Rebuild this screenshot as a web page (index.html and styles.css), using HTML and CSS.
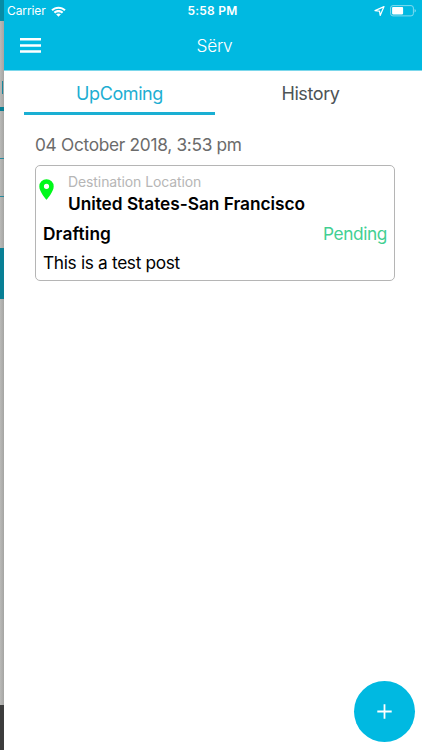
FILE: index.html
```html
<!DOCTYPE html>
<html lang="en">
<head>
<meta charset="utf-8">
<title>Sërv</title>
<link rel="stylesheet" href="styles.css">
</head>
<body>
<div class="app">
  <div class="drawer">
    <div class="drawer-header"></div>
    <div class="drawer-profile"><i class="drawer-mark"></i></div>
    <div class="drawer-bar"></div>
    <div class="drawer-row row-first"></div>
    <div class="drawer-row row-second"></div>
    <div class="drawer-row row-third"></div>
    <div class="drawer-active"></div>
    <div class="drawer-space"></div>
    <div class="drawer-footer"></div>
  </div>
  <main class="screen">
    <header class="header">
      <div class="status">
        <div class="status-left">
          <span class="carrier">Carrier</span>
          <svg class="wifi" width="15" height="11" viewBox="0 0 15 11" fill="#fff"><path d="M.3 3.6C4.3-.3 10.7-.3 14.7 3.6L13.2 5.1C10.1 2.1 4.9 2.1 1.8 5.1zM2.7 6C5.4 3.4 9.6 3.4 12.3 6L10.8 7.5C8.9 5.7 6.1 5.7 4.2 7.5zM5.1 8.3C6.5 7.1 8.5 7.1 9.9 8.3L7.5 10.7z"/></svg>
        </div>
        <span class="clock">5:58 PM</span>
        <div class="status-right">
          <svg width="11" height="11" viewBox="0 0 11 11" fill="none" stroke="#fff" stroke-width="1.2" stroke-linejoin="round"><path d="M10 .6 6.2 9.5 5.5 5.2 1 4.6z"/></svg>
          <svg width="26" height="12" viewBox="0 0 26 12"><rect x=".6" y=".6" width="22.8" height="10.3" rx="2.4" fill="none" stroke="#8fdff1" stroke-width=".9"/><rect x="2.1" y="2.1" width="11" height="7.3" rx=".8" fill="#fff"/><path d="M24.6 4v3.6q1.2-.5 1.2-1.8T24.6 4z" fill="#8fdff1"/></svg>
        </div>
      </div>
      <div class="nav">
        <svg class="menu" width="21" height="15" viewBox="0 0 21 15" fill="#fff"><path d="M0 0h21v2.6H0zM0 6.2h21v2.6H0zM0 12.2h21v2.6H0z"/></svg>
        <h1 class="title">Sërv</h1>
      </div>
    </header>
    <nav class="tabs">
      <div class="tab active"><span class="tab-up">UpComing</span></div>
      <div class="tab"><span class="tab-history">History</span></div>
    </nav>
    <section class="content">
      <div class="date"><span>04 October 2018, 3:53 pm</span></div>
      <article class="card">
        <div class="place">
          <svg class="pin" width="15" height="21" viewBox="0 0 15 21"><path fill="#00f91a" fill-rule="evenodd" d="M7.5.2A7.2 7.2 0 0 0 .3 7.4C.3 12.8 7.5 20.8 7.5 20.8s7.2-8 7.2-13.4A7.2 7.2 0 0 0 7.5.2zm0 9.7a2.6 2.6 0 1 1 0-5.2 2.6 2.6 0 0 1 0 5.2z"/></svg>
          <div class="place-text">
            <div class="label">Destination Location</div>
            <div class="city">United States-San Francisco</div>
          </div>
        </div>
        <div class="job">
          <span class="job-name">Drafting</span>
          <span class="job-status">Pending</span>
        </div>
        <div class="note">This is a test post</div>
      </article>
    </section>
    <div class="fab">
      <svg width="15" height="15" viewBox="0 0 15 15" stroke="#fff" stroke-width="1.8"><path d="M7.5.3v14.4M.3 7.5h14.4"/></svg>
    </div>
  </main>
</div>
</body>
</html>
```
FILE: styles.css
```css
* { box-sizing: border-box; }
body {
  margin: 0;
  font-family: Inter, "Liberation Sans", sans-serif;
  font-size: 17.3px;
  color: #000;
  background: #fff;
  white-space: nowrap;
}
.app { display: flex; height: 750px; overflow: hidden; }

.drawer {
  width: 4px;
  display: flex;
  flex-direction: column;
  background: linear-gradient(90deg, #b9b9b7, #a5a5a3);
}
.drawer-header { height: 21px; background: #078ca5; }
.drawer-profile { height: 86px; padding: 60px 0 0 2px; }
.drawer-mark { display: block; width: 1px; height: 13px; background: #16859b; }
.drawer-bar { height: 4px; background: #087f95; }
.drawer-row { border-bottom: 1px solid #26899c; }
.row-first { height: 48px; }
.row-second { height: 38px; }
.row-third { height: 51px; border-bottom: 0; }
.drawer-active { height: 51px; background: #087f95; }
.drawer-space { flex: 1; }
.drawer-footer { height: 45px; background: #3c3c3c; }

.screen { flex: 1; display: flex; flex-direction: column; background: #fff; }
.header { height: 71px; background: #00b9e1; color: #fff; border-bottom: 1px solid #7bd7eb; }
.status {
  height: 22px;
  padding: 0 6px 0 3px;
  display: grid;
  grid-template-columns: 1fr auto 1fr;
  align-items: center;
  font-size: 12px;
  line-height: 22px;
}
.status-left, .status-right { display: flex; align-items: center; }
.status-left { gap: 5px; }
.status-right { justify-content: flex-end; gap: 5px; }
.carrier { letter-spacing: -.1px; }
.clock { padding-left: 2px; font-weight: 600; letter-spacing: .2px; }
.nav {
  height: 48px;
  padding: 0 13px 0 16px;
  display: grid;
  grid-template-columns: 1fr auto 1fr;
  align-items: center;
}
.menu { margin-bottom: 1px; }
.title { margin: 0; font-size: 17.3px; font-weight: 350; line-height: 24px; letter-spacing: -.3px; }

.tabs { height: 45px; padding: 0 16px 0 20px; display: flex; }
.tab {
  width: 191px;
  height: 44px;
  border-bottom: 3px solid transparent;
  text-align: center;
  font-size: 18px;
  line-height: 46px;
  letter-spacing: -.4px;
  color: #4d5356;
}
.tab.active { color: #1daed2; border-color: #1aafd3; }

.content { flex: 1; padding: 17px 27px 0 31px; }
.date { height: 32px; line-height: 24px; letter-spacing: -.3px; color: #6b6b6b; }
.card { height: 116px; border: 1px solid #b5b5b5; border-radius: 5px; padding: 5px 7px 0; }
.place { display: flex; height: 47px; }
.pin { margin: 8px 14px 0 -4px; }
.label { height: 21px; font-size: 14px; line-height: 21px; letter-spacing: -.1px; color: #b6b6b6; }
.city { height: 24px; line-height: 24px; font-weight: 600; letter-spacing: -.03px; }
.job { display: flex; justify-content: space-between; height: 30px; line-height: 31px; }
.job-name { font-weight: 600; letter-spacing: .1px; }
.job-status { color: #42cf92; letter-spacing: -.4px; }
.note { height: 29px; line-height: 29px; letter-spacing: -.33px; }
.fab {
  width: 61px;
  height: 61px;
  margin: 0 7px 8px auto;
  border-radius: 50%;
  background: #00b9e1;
  display: flex;
  align-items: center;
  justify-content: center;
}
```
